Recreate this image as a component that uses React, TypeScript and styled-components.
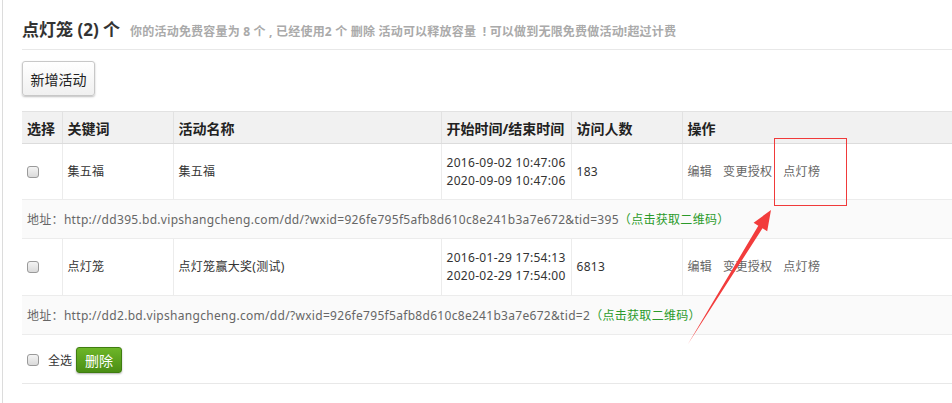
import React from "react";
import styled, { createGlobalStyle } from "styled-components";

const Global = createGlobalStyle`
  html, body { margin: 0; padding: 0; background: #fff; }
  body {
    font-family: "Noto Sans", "Noto Sans CJK SC", sans-serif;
    font-size: 12px;
    color: #333;
    overflow: hidden;
  }
`;

const Page = styled.div`
  position: relative;
  width: 952px;
  height: 403px;
  overflow: hidden;
  box-sizing: border-box;
  margin-left: 2px;
  border-left: 1px solid #dcdcdc;
  padding-left: 19px;
`;

const TitleBar = styled.div`
  display: flex;
  align-items: baseline;
  gap: 10px;
  box-sizing: border-box;
  margin-top: 18px;
  height: 32px;
  line-height: 24px;
  border-bottom: 1px solid #e8e8e8;
  white-space: nowrap;
`;

const Title = styled.h1`
  margin: 0;
  font-size: 17px;
  line-height: 24px;
  font-weight: bold;
  color: #333;
`;

const Hint = styled.span`
  font-size: 12px;
  font-weight: bold;
  letter-spacing: 0.2px;
  color: #aaa;
`;

const AddButton = styled.button`
  display: block;
  margin-top: 11px;
  height: 35px;
  width: 73px;
  padding: 0;
  font-family: inherit;
  font-size: 14px;
  color: #222;
  background: linear-gradient(#ffffff, #f0f0f0);
  border: 1px solid #c8c8c8;
  border-radius: 3px;
  box-shadow: 0 1px 2px rgba(0, 0, 0, 0.25);
`;

const Table = styled.table`
  margin-top: 15px;
  width: 930px;
  border-collapse: collapse;
  table-layout: fixed;
  border-top: 1px solid #e2e2e2;
`;

const Col = styled.col<{ $w?: number }>`
  width: ${(p) => (p.$w ? `${p.$w}px` : "auto")};
`;

const Th = styled.th`
  height: 31px;
  padding: 0 5px;
  text-align: left;
  font-size: 14px;
  font-weight: bold;
  color: #222;
  background: #f1f1f1;
  border-left: 1px solid #e2e2e2;
  border-bottom: 1px solid #dcdcdc;
  white-space: nowrap;
  &:first-child { border-left: none; }
`;

const Td = styled.td<{ $h?: number }>`
  height: ${(p) => p.$h ?? 55}px;
  padding: 0 5px;
  vertical-align: middle;
  font-size: 12px;
  letter-spacing: 0.3px;
  line-height: 18px;
  color: #333;
  border-left: 1px solid #ececec;
  border-bottom: 1px solid #ececec;
  white-space: nowrap;
  &:first-child { border-left: none; }
`;

const AddrCell = styled.td`
  height: 38px;
  padding: 0 5px;
  background: #fafafa;
  font-size: 12px;
  letter-spacing: 0.3px;
  color: #666;
  border-bottom: 1px solid #ececec;
  white-space: nowrap;
`;

const QrLink = styled.a`
  color: #2a9a2a;
  text-decoration: none;
`;

const Check = styled.input.attrs({ type: "checkbox" })`
  appearance: none;
  -webkit-appearance: none;
  display: block;
  margin: 0;
  width: 12px;
  height: 12px;
  border: 1px solid #9a9a9a;
  border-radius: 3px;
  background: linear-gradient(#f4f4f4, #dadada);
  box-sizing: border-box;
`;

const Ops = styled.div`
  display: flex;
  gap: 11px;
  white-space: nowrap;
`;

const OpLink = styled.a`
  color: #666;
  text-decoration: none;
`;

const Footer = styled.div`
  display: flex;
  align-items: center;
  width: 930px;
  margin-top: 12px;
  padding: 0 0 10px 5px;
  border-bottom: 1px solid #e8e8e8;
`;

const AllLabel = styled.span`
  margin-left: 9px;
  margin-right: 4px;
  font-size: 12px;
  color: #333;
`;

const DeleteButton = styled.button`
  height: 26px;
  width: 46px;
  padding: 0;
  font-family: inherit;
  font-size: 14px;
  color: #fff;
  background: linear-gradient(#6db628, #4a8e14);
  border: 1px solid #3f7d10;
  border-radius: 3px;
  box-shadow: 0 1px 2px rgba(0, 0, 0, 0.3);
`;

const Overlay = styled.svg`
  position: absolute;
  left: -3px;
  top: 0;
  pointer-events: none;
`;

type Row = {
  keyword: string;
  name: string;
  start: string;
  end: string;
  visits: string;
  url: string;
};

const rows: Row[] = [
  {
    keyword: "集五福",
    name: "集五福",
    start: "2016-09-02 10:47:06",
    end: "2020-09-09 10:47:06",
    visits: "183",
    url: "http://dd395.bd.vipshangcheng.com/dd/?wxid=926fe795f5afb8d610c8e241b3a7e672&tid=395",
  },
  {
    keyword: "点灯笼",
    name: "点灯笼赢大奖(测试)",
    start: "2016-01-29 17:54:13",
    end: "2020-02-29 17:54:00",
    visits: "6813",
    url: "http://dd2.bd.vipshangcheng.com/dd/?wxid=926fe795f5afb8d610c8e241b3a7e672&tid=2",
  },
];

export default function App() {
  return (
    <>
      <Global />
      <Page>
        <TitleBar>
          <Title>点灯笼 (2) 个</Title>
          <Hint>
            你的活动免费容量为 8 个 , 已经使用2 个 删除 活动可以释放容量{"\u00a0\u00a0"}! 可以做到无限免费做活动!超过计费
          </Hint>
        </TitleBar>
        <AddButton>新增活动</AddButton>
        <Table>
          <colgroup>
            <Col $w={40} />
            <Col $w={111} />
            <Col $w={268} />
            <Col $w={130} />
            <Col $w={111} />
            <Col />
          </colgroup>
          <thead>
            <tr>
              <Th>选择</Th>
              <Th>关键词</Th>
              <Th>活动名称</Th>
              <Th>开始时间/结束时间</Th>
              <Th>访问人数</Th>
              <Th>操作</Th>
            </tr>
          </thead>
          <tbody>
            {rows.map((r, i) => (
              <React.Fragment key={r.url}>
                <tr>
                  <Td $h={i === 0 ? 55 : 56}>
                    <Check />
                  </Td>
                  <Td>{r.keyword}</Td>
                  <Td>{r.name}</Td>
                  <Td>
                    {r.start}
                    <br />
                    {r.end}
                  </Td>
                  <Td>{r.visits}</Td>
                  <Td>
                    <Ops>
                      <OpLink>编辑</OpLink>
                      <OpLink>变更授权</OpLink>
                      <OpLink>点灯榜</OpLink>
                    </Ops>
                  </Td>
                </tr>
                <tr>
                  <AddrCell colSpan={6}>
                    地址：{r.url}
                    <QrLink>（点击获取二维码）</QrLink>
                  </AddrCell>
                </tr>
              </React.Fragment>
            ))}
          </tbody>
        </Table>
        <Footer>
          <Check />
          <AllLabel>全选</AllLabel>
          <DeleteButton>删除</DeleteButton>
        </Footer>
        <Overlay width="952" height="403" viewBox="0 0 952 403">
          <rect x="774.5" y="138.5" width="72" height="67" fill="none" stroke="#f03a3a" strokeWidth="1" />
          <polygon
            points="771,210 753.6,222.8 758.3,225.7 688,344 762.5,228.3 767.2,231.2"
            fill="#f23c3c"
          />
        </Overlay>
      </Page>
    </>
  );
}
